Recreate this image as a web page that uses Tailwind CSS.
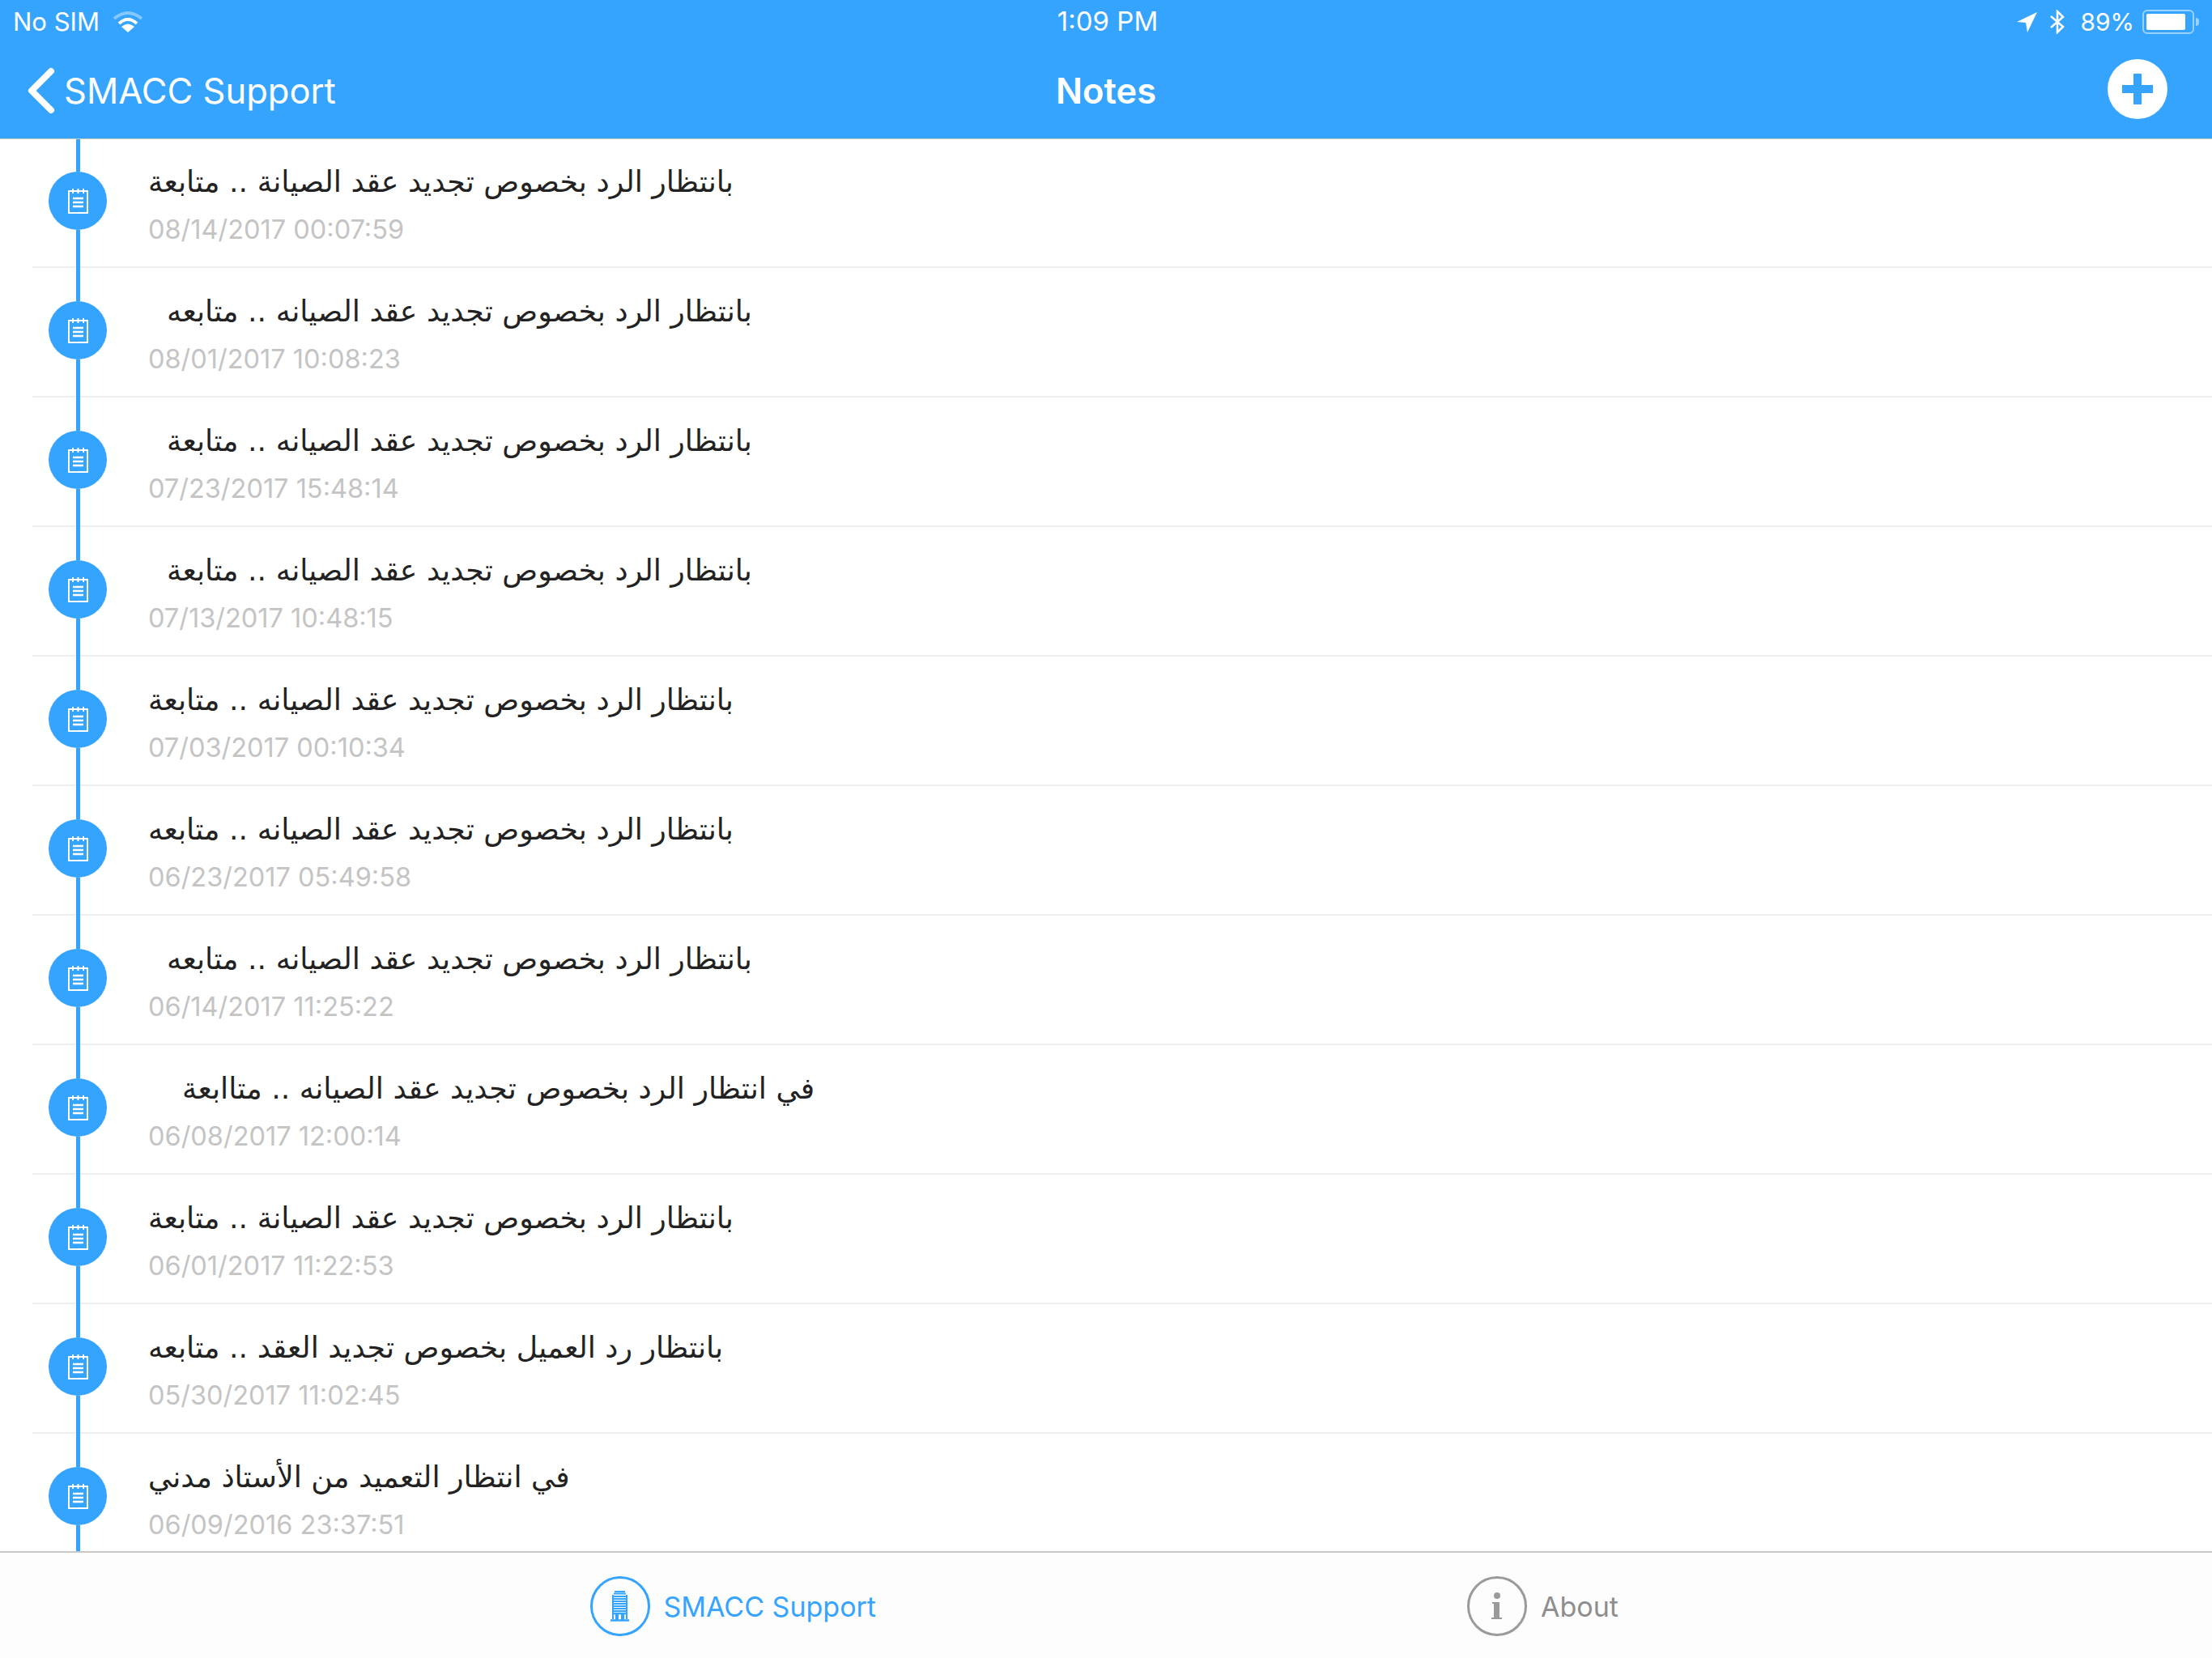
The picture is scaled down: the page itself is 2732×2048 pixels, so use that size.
<!DOCTYPE html>
<html lang="en">
  <head>
    <meta charset="UTF-8" />
    <meta name="viewport" content="width=device-width, initial-scale=1.0" />
    <title>Notes</title>
    <script src="https://cdn.jsdelivr.net/npm/@tailwindcss/browser@4"></script>
  </head>
  <body class="bg-white font-['Inter','Noto_Sans',sans-serif]">
    <div class="flex h-[2048px] w-[2732px] flex-col overflow-hidden">
      <!-- top bar -->
      <header class="relative z-10 h-[171px] shrink-0 bg-[#35a4ff] text-white shadow-[0_1px_0_#c8c8c8]">
        <div class="flex h-[54px] items-center justify-between pl-[16px] pr-[16px] text-[31px]">
          <div class="flex flex-1 items-center gap-[16px]">
            <span>No SIM</span>
            <svg width="38" height="28" viewBox="0 0 38 28" fill="none" stroke-width="4" stroke-linecap="butt">
              <path d="M2 10 Q19 -4 36 10" stroke="white" stroke-opacity="0.4" />
              <path d="M8 16 Q19 6 30 16" stroke="white" />
              <path d="M19 27 L11 20 Q19 13 27 20 Z" fill="white" />
            </svg>
          </div>
          <span class="ml-[4px] text-[33px]">1:09 PM</span>
          <div class="flex flex-1 items-center justify-end">
            <svg class="mr-[14px]" width="27" height="27" viewBox="0 0 27 27" fill="white"><path d="M26 1 L1 13 L12 14 L14 26Z" /></svg>
            <svg class="mr-[18px]" width="20" height="30" viewBox="0 0 20 30" fill="none" stroke="white" stroke-width="2.5"><path d="M2 8 L17 21 L10 28 L10 2 L17 9 L2 22" /></svg>
            <span class="mr-[10px] text-[30px]">89%</span>
            <div class="flex h-[30px] w-[64px] rounded-[6px] border-2 border-white/50 p-[3px]"><div class="h-full w-[48px] rounded-[2px] bg-white"></div></div>
            <div class="ml-[2px] h-[10px] w-[4px] rounded-r-sm bg-white/50"></div>
          </div>
        </div>
        <div class="flex h-[117px] items-start justify-between px-[34px] pt-[19px]">
          <div class="flex flex-1 items-center gap-[11px] text-[43.5px] leading-[78px]">
            <svg width="34" height="58" viewBox="0 0 34 58" fill="none" stroke="white" stroke-width="8" stroke-linecap="round" stroke-linejoin="round"><path d="M29 5 L5 29 L29 53" /></svg>
            <span>SMACC Support</span>
          </div>
          <span class="text-[43.5px] font-semibold leading-[78px]">Notes</span>
          <div class="flex flex-1 justify-end">
            <div class="mr-[21px] flex h-[74px] w-[74px] items-center justify-center rounded-full bg-white">
              <svg width="38" height="38" viewBox="0 0 38 38" fill="#35a4ff"><path d="M14 0h10v14h14v10H24v14H14V24H0V14h14z" /></svg>
            </div>
          </div>
        </div>
      </header>

      <!-- notes -->
      <main class="min-h-0 flex-1 overflow-hidden">
        <div class="ml-[40px] flex h-[160px] border-b-2 border-[#efefef]">
          <div class="-mb-[2px] flex w-[112px] shrink-0 flex-col items-center">
            <div class="h-[41px] w-[5px] bg-[#35a4ff]"></div>
            <div class="flex h-[72px] w-[72px] items-center justify-center rounded-full bg-[#35a4ff]">
              <svg width="25" height="31" viewBox="0 0 25 31" fill="none" stroke="white" stroke-width="2"><rect x="1" y="3" width="23" height="27" /><path d="M6 0v6M12.500 0v6M19 0v6" /><path d="M6 12h13M6 17h13M6 22h13" stroke-width="2.500" /></svg>
            </div>
            <div class="w-[5px] flex-1 bg-[#35a4ff]"></div>
          </div>
          <div class="ml-[31px] pt-[30px]">
            <p dir="rtl" class="w-fit font-['DejaVu_Sans',sans-serif] text-[36.3px] leading-[48px] text-[#222]">بانتظار الرد بخصوص تجديد عقد الصيانة .. متابعة</p>
            <p class="mt-[13px] text-[32.500px] leading-[44px] text-[#c4c4c4]">08/14/2017 00:07:59</p>
          </div>
        </div>
        <div class="ml-[40px] flex h-[160px] border-b-2 border-[#efefef]">
          <div class="-mb-[2px] flex w-[112px] shrink-0 flex-col items-center">
            <div class="h-[41px] w-[5px] bg-[#35a4ff]"></div>
            <div class="flex h-[72px] w-[72px] items-center justify-center rounded-full bg-[#35a4ff]">
              <svg width="25" height="31" viewBox="0 0 25 31" fill="none" stroke="white" stroke-width="2"><rect x="1" y="3" width="23" height="27" /><path d="M6 0v6M12.500 0v6M19 0v6" /><path d="M6 12h13M6 17h13M6 22h13" stroke-width="2.500" /></svg>
            </div>
            <div class="w-[5px] flex-1 bg-[#35a4ff]"></div>
          </div>
          <div class="ml-[31px] pt-[30px]">
            <p dir="rtl" class="w-fit pl-[23px] font-['DejaVu_Sans',sans-serif] text-[36.3px] leading-[48px] text-[#222]">بانتظار الرد بخصوص تجديد عقد الصيانه .. متابعه</p>
            <p class="mt-[13px] text-[32.500px] leading-[44px] text-[#c4c4c4]">08/01/2017 10:08:23</p>
          </div>
        </div>
        <div class="ml-[40px] flex h-[160px] border-b-2 border-[#efefef]">
          <div class="-mb-[2px] flex w-[112px] shrink-0 flex-col items-center">
            <div class="h-[41px] w-[5px] bg-[#35a4ff]"></div>
            <div class="flex h-[72px] w-[72px] items-center justify-center rounded-full bg-[#35a4ff]">
              <svg width="25" height="31" viewBox="0 0 25 31" fill="none" stroke="white" stroke-width="2"><rect x="1" y="3" width="23" height="27" /><path d="M6 0v6M12.500 0v6M19 0v6" /><path d="M6 12h13M6 17h13M6 22h13" stroke-width="2.500" /></svg>
            </div>
            <div class="w-[5px] flex-1 bg-[#35a4ff]"></div>
          </div>
          <div class="ml-[31px] pt-[30px]">
            <p dir="rtl" class="w-fit pl-[23px] font-['DejaVu_Sans',sans-serif] text-[36.3px] leading-[48px] text-[#222]">بانتظار الرد بخصوص تجديد عقد الصيانه .. متابعة</p>
            <p class="mt-[13px] text-[32.500px] leading-[44px] text-[#c4c4c4]">07/23/2017 15:48:14</p>
          </div>
        </div>
        <div class="ml-[40px] flex h-[160px] border-b-2 border-[#efefef]">
          <div class="-mb-[2px] flex w-[112px] shrink-0 flex-col items-center">
            <div class="h-[41px] w-[5px] bg-[#35a4ff]"></div>
            <div class="flex h-[72px] w-[72px] items-center justify-center rounded-full bg-[#35a4ff]">
              <svg width="25" height="31" viewBox="0 0 25 31" fill="none" stroke="white" stroke-width="2"><rect x="1" y="3" width="23" height="27" /><path d="M6 0v6M12.500 0v6M19 0v6" /><path d="M6 12h13M6 17h13M6 22h13" stroke-width="2.500" /></svg>
            </div>
            <div class="w-[5px] flex-1 bg-[#35a4ff]"></div>
          </div>
          <div class="ml-[31px] pt-[30px]">
            <p dir="rtl" class="w-fit pl-[23px] font-['DejaVu_Sans',sans-serif] text-[36.3px] leading-[48px] text-[#222]">بانتظار الرد بخصوص تجديد عقد الصيانه .. متابعة</p>
            <p class="mt-[13px] text-[32.500px] leading-[44px] text-[#c4c4c4]">07/13/2017 10:48:15</p>
          </div>
        </div>
        <div class="ml-[40px] flex h-[160px] border-b-2 border-[#efefef]">
          <div class="-mb-[2px] flex w-[112px] shrink-0 flex-col items-center">
            <div class="h-[41px] w-[5px] bg-[#35a4ff]"></div>
            <div class="flex h-[72px] w-[72px] items-center justify-center rounded-full bg-[#35a4ff]">
              <svg width="25" height="31" viewBox="0 0 25 31" fill="none" stroke="white" stroke-width="2"><rect x="1" y="3" width="23" height="27" /><path d="M6 0v6M12.500 0v6M19 0v6" /><path d="M6 12h13M6 17h13M6 22h13" stroke-width="2.500" /></svg>
            </div>
            <div class="w-[5px] flex-1 bg-[#35a4ff]"></div>
          </div>
          <div class="ml-[31px] pt-[30px]">
            <p dir="rtl" class="w-fit font-['DejaVu_Sans',sans-serif] text-[36.3px] leading-[48px] text-[#222]">بانتظار الرد بخصوص تجديد عقد الصيانه .. متابعة</p>
            <p class="mt-[13px] text-[32.500px] leading-[44px] text-[#c4c4c4]">07/03/2017 00:10:34</p>
          </div>
        </div>
        <div class="ml-[40px] flex h-[160px] border-b-2 border-[#efefef]">
          <div class="-mb-[2px] flex w-[112px] shrink-0 flex-col items-center">
            <div class="h-[41px] w-[5px] bg-[#35a4ff]"></div>
            <div class="flex h-[72px] w-[72px] items-center justify-center rounded-full bg-[#35a4ff]">
              <svg width="25" height="31" viewBox="0 0 25 31" fill="none" stroke="white" stroke-width="2"><rect x="1" y="3" width="23" height="27" /><path d="M6 0v6M12.500 0v6M19 0v6" /><path d="M6 12h13M6 17h13M6 22h13" stroke-width="2.500" /></svg>
            </div>
            <div class="w-[5px] flex-1 bg-[#35a4ff]"></div>
          </div>
          <div class="ml-[31px] pt-[30px]">
            <p dir="rtl" class="w-fit font-['DejaVu_Sans',sans-serif] text-[36.3px] leading-[48px] text-[#222]">بانتظار الرد بخصوص تجديد عقد الصيانه .. متابعه</p>
            <p class="mt-[13px] text-[32.500px] leading-[44px] text-[#c4c4c4]">06/23/2017 05:49:58</p>
          </div>
        </div>
        <div class="ml-[40px] flex h-[160px] border-b-2 border-[#efefef]">
          <div class="-mb-[2px] flex w-[112px] shrink-0 flex-col items-center">
            <div class="h-[41px] w-[5px] bg-[#35a4ff]"></div>
            <div class="flex h-[72px] w-[72px] items-center justify-center rounded-full bg-[#35a4ff]">
              <svg width="25" height="31" viewBox="0 0 25 31" fill="none" stroke="white" stroke-width="2"><rect x="1" y="3" width="23" height="27" /><path d="M6 0v6M12.500 0v6M19 0v6" /><path d="M6 12h13M6 17h13M6 22h13" stroke-width="2.500" /></svg>
            </div>
            <div class="w-[5px] flex-1 bg-[#35a4ff]"></div>
          </div>
          <div class="ml-[31px] pt-[30px]">
            <p dir="rtl" class="w-fit pl-[23px] font-['DejaVu_Sans',sans-serif] text-[36.3px] leading-[48px] text-[#222]">بانتظار الرد بخصوص تجديد عقد الصيانه .. متابعه</p>
            <p class="mt-[13px] text-[32.500px] leading-[44px] text-[#c4c4c4]">06/14/2017 11:25:22</p>
          </div>
        </div>
        <div class="ml-[40px] flex h-[160px] border-b-2 border-[#efefef]">
          <div class="-mb-[2px] flex w-[112px] shrink-0 flex-col items-center">
            <div class="h-[41px] w-[5px] bg-[#35a4ff]"></div>
            <div class="flex h-[72px] w-[72px] items-center justify-center rounded-full bg-[#35a4ff]">
              <svg width="25" height="31" viewBox="0 0 25 31" fill="none" stroke="white" stroke-width="2"><rect x="1" y="3" width="23" height="27" /><path d="M6 0v6M12.500 0v6M19 0v6" /><path d="M6 12h13M6 17h13M6 22h13" stroke-width="2.500" /></svg>
            </div>
            <div class="w-[5px] flex-1 bg-[#35a4ff]"></div>
          </div>
          <div class="ml-[31px] pt-[30px]">
            <p dir="rtl" class="w-fit pl-[42px] font-['DejaVu_Sans',sans-serif] text-[36.3px] leading-[48px] text-[#222]">في انتظار الرد بخصوص تجديد عقد الصيانه .. متاابعة</p>
            <p class="mt-[13px] text-[32.500px] leading-[44px] text-[#c4c4c4]">06/08/2017 12:00:14</p>
          </div>
        </div>
        <div class="ml-[40px] flex h-[160px] border-b-2 border-[#efefef]">
          <div class="-mb-[2px] flex w-[112px] shrink-0 flex-col items-center">
            <div class="h-[41px] w-[5px] bg-[#35a4ff]"></div>
            <div class="flex h-[72px] w-[72px] items-center justify-center rounded-full bg-[#35a4ff]">
              <svg width="25" height="31" viewBox="0 0 25 31" fill="none" stroke="white" stroke-width="2"><rect x="1" y="3" width="23" height="27" /><path d="M6 0v6M12.500 0v6M19 0v6" /><path d="M6 12h13M6 17h13M6 22h13" stroke-width="2.500" /></svg>
            </div>
            <div class="w-[5px] flex-1 bg-[#35a4ff]"></div>
          </div>
          <div class="ml-[31px] pt-[30px]">
            <p dir="rtl" class="w-fit font-['DejaVu_Sans',sans-serif] text-[36.3px] leading-[48px] text-[#222]">بانتظار الرد بخصوص تجديد عقد الصيانة .. متابعة</p>
            <p class="mt-[13px] text-[32.500px] leading-[44px] text-[#c4c4c4]">06/01/2017 11:22:53</p>
          </div>
        </div>
        <div class="ml-[40px] flex h-[160px] border-b-2 border-[#efefef]">
          <div class="-mb-[2px] flex w-[112px] shrink-0 flex-col items-center">
            <div class="h-[41px] w-[5px] bg-[#35a4ff]"></div>
            <div class="flex h-[72px] w-[72px] items-center justify-center rounded-full bg-[#35a4ff]">
              <svg width="25" height="31" viewBox="0 0 25 31" fill="none" stroke="white" stroke-width="2"><rect x="1" y="3" width="23" height="27" /><path d="M6 0v6M12.500 0v6M19 0v6" /><path d="M6 12h13M6 17h13M6 22h13" stroke-width="2.500" /></svg>
            </div>
            <div class="w-[5px] flex-1 bg-[#35a4ff]"></div>
          </div>
          <div class="ml-[31px] pt-[30px]">
            <p dir="rtl" class="w-fit font-['DejaVu_Sans',sans-serif] text-[36.3px] leading-[48px] text-[#222]">بانتظار رد العميل بخصوص تجديد العقد .. متابعه</p>
            <p class="mt-[13px] text-[32.500px] leading-[44px] text-[#c4c4c4]">05/30/2017 11:02:45</p>
          </div>
        </div>
        <div class="ml-[40px] flex h-[160px]">
          <div class="flex w-[112px] shrink-0 flex-col items-center">
            <div class="h-[41px] w-[5px] bg-[#35a4ff]"></div>
            <div class="flex h-[72px] w-[72px] items-center justify-center rounded-full bg-[#35a4ff]">
              <svg width="25" height="31" viewBox="0 0 25 31" fill="none" stroke="white" stroke-width="2"><rect x="1" y="3" width="23" height="27" /><path d="M6 0v6M12.500 0v6M19 0v6" /><path d="M6 12h13M6 17h13M6 22h13" stroke-width="2.500" /></svg>
            </div>
            <div class="w-[5px] flex-1 bg-[#35a4ff]"></div>
          </div>
          <div class="ml-[31px] pt-[30px]">
            <p dir="rtl" class="w-fit font-['DejaVu_Sans',sans-serif] text-[36.3px] leading-[48px] text-[#222]">في انتظار التعميد من الأستاذ مدني</p>
            <p class="mt-[13px] text-[32.500px] leading-[44px] text-[#c4c4c4]">06/09/2016 23:37:51</p>
          </div>
        </div>
      </main>

      <!-- tab bar -->
      <nav class="grid h-[132px] shrink-0 grid-cols-2 border-t-2 border-[#c8c8c8] bg-[#fdfdfd] text-[34px]">
        <div class="flex items-start justify-end pr-[284px] pt-[29px]">
          <div class="flex items-center gap-[17px] text-[#35a4ff]">
            <div class="flex h-[74px] w-[74px] items-center justify-center rounded-full border-[3px] border-[#35a4ff]">
              <svg width="23" height="38" viewBox="0 0 23 38" fill="none" stroke="#35a4ff">
                <path d="M5 1h13M4 3.500h15" stroke-width="2" />
                <path d="M3 7h17M3 10h17M3 13h17M3 16h17M3 19h17M3 22h17M3 25h17" stroke-width="2" />
                <path d="M3 5v30M20 5v30" stroke-width="2" />
                <path d="M3 28h17M0 36.500h23" stroke-width="2.500" />
                <path d="M6 29h4v7H6zM13 29h4v7h-4z" fill="#35a4ff" stroke="none" />
              </svg>
            </div>
            <span>SMACC Support</span>
          </div>
        </div>
        <div class="flex items-start pl-[446px] pt-[29px]">
          <div class="flex items-center gap-[17px] text-[#8e8e8e]">
            <div class="flex h-[74px] w-[74px] items-center justify-center rounded-full border-[3px] border-[#9a9a9a]">
              <svg width="14" height="34" viewBox="0 0 14 34" fill="#9a9a9a"><circle cx="7" cy="4" r="4" /><path d="M1 12h9v19h3v2H0v-2h3V14H1z" /></svg>
            </div>
            <span>About</span>
          </div>
        </div>
      </nav>
    </div>
  </body>
</html>
